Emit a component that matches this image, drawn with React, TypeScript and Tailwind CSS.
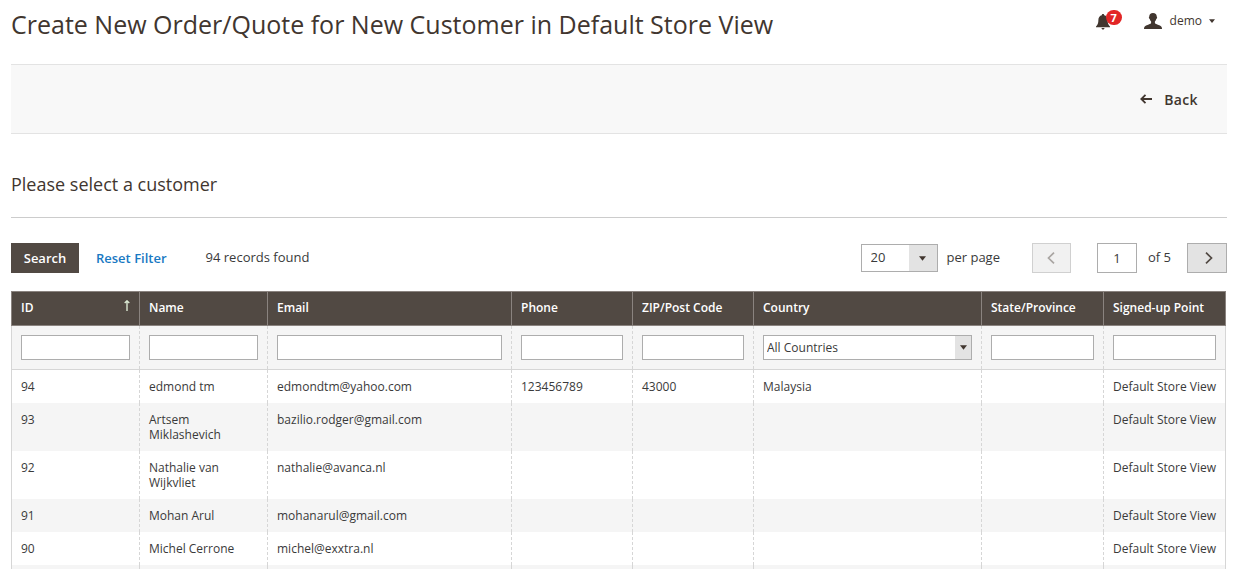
import React from "react";

type Customer = {
  id: string;
  name: string;
  email: string;
  phone?: string;
  zip?: string;
  country?: string;
  state?: string;
  store: string;
};

const customers: Customer[] = [
  { id: "94", name: "edmond tm", email: "edmondtm@yahoo.com", phone: "123456789", zip: "43000", country: "Malaysia", store: "Default Store View" },
  { id: "93", name: "Artsem Miklashevich", email: "bazilio.rodger@gmail.com", store: "Default Store View" },
  { id: "92", name: "Nathalie van Wijkvliet", email: "nathalie@avanca.nl", store: "Default Store View" },
  { id: "91", name: "Mohan Arul", email: "mohanarul@gmail.com", store: "Default Store View" },
  { id: "90", name: "Michel Cerrone", email: "michel@exxtra.nl", store: "Default Store View" },
];

const columns = [
  { key: "id", label: "ID", width: "w-[128px]" },
  { key: "name", label: "Name", width: "w-[128px]" },
  { key: "email", label: "Email", width: "w-[244px]" },
  { key: "phone", label: "Phone", width: "w-[121px]" },
  { key: "zip", label: "ZIP/Post Code", width: "w-[121px]" },
  { key: "country", label: "Country", width: "w-[228px]" },
  { key: "state", label: "State/Province", width: "w-[122px]" },
  { key: "store", label: "Signed-up Point", width: "w-[122px]" },
] as const;

function Caret({ className }: { className?: string }) {
  return (
    <svg viewBox="0 0 8 5" className={className} fill="currentColor" aria-hidden="true">
      <path d="M0 0h8L4 5z" />
    </svg>
  );
}

function Header() {
  return (
    <header className="flex h-16 items-start justify-between">
      <h1 className="pt-1 text-[25px] leading-10 text-[#41362f]">
        Create New Order/Quote for New Customer in Default Store View
      </h1>
      <div className="flex items-center pt-2 pr-3">
        <a href="#notifications" aria-label="Notifications" className="relative mr-8 block h-6 w-4 pt-1.5 text-[#41362f]">
          <svg viewBox="0 0 14 16" className="h-4 w-3.5" fill="currentColor" aria-hidden="true">
            <path d="M7 0c.8 0 1.200.5 1.200 1.200C10.500 1.700 11.600 3.500 11.600 5.800c0 3.600.7 5 2.400 6.700v.7H0v-.7c1.700-1.700 2.400-3.100 2.400-6.700 0-2.300 1.100-4.100 3.400-4.600C5.800.500 6.200 0 7 0zM5.500 14h3c0 .9-.6 1.500-1.500 1.500S5.500 14.900 5.500 14z" />
          </svg>
          <span className="absolute top-0.5 left-2.5 flex h-[15px] w-4 items-center justify-center rounded-full bg-[#e22626] text-[11px] leading-none font-bold text-white">
            7
          </span>
        </a>
        <button type="button" className="flex items-center pt-px text-xs text-[#41362f]">
          <svg viewBox="0 0 18 16" className="mr-2 h-4 w-[18px]" fill="currentColor" aria-hidden="true">
            <path d="M9 0c2.400 0 3.800 1.400 3.700 3.600.4.200.5.600.4 1.200-.1.700-.4 1.100-.8 1.200-.3 1.200-.8 2-1.400 2.600v1.500c.6 1 1.800 1.300 3.600 1.800 2.200.6 3.200 1.300 3.500 3.500V16H0v-.6c.3-2.200 1.300-2.900 3.500-3.500 1.800-.5 3-.8 3.600-1.800V8.600C6.500 8 6 7.200 5.700 6c-.4-.1-.7-.5-.8-1.200-.1-.6 0-1 .4-1.200C5.200 1.400 6.600 0 9 0z" />
          </svg>
          demo
          <Caret className="ml-[7px] h-1 w-1.5" />
        </button>
      </div>
    </header>
  );
}

function Toolbar() {
  return (
    <div className="flex flex-wrap items-center justify-between">
      <div className="flex items-center">
        <button type="button" className="h-[30px] w-[68px] bg-[#514943] pt-0.5 text-[13px] font-semibold text-white">
          Search
        </button>
        <button type="button" className="ml-[17px] pt-0.5 text-[13px] font-semibold text-[#1979c3]">
          Reset Filter
        </button>
        <p className="ml-[39px] text-[13px]">94 records found</p>
      </div>
      <div className="flex items-center text-[13px]">
        <label className="flex items-center">
          <span className="relative mr-[9px] block">
            <select defaultValue="20" className="h-7 w-[77px] appearance-none border border-[#adadad] bg-white pl-[9px] text-[13px]">
              <option>20</option>
              <option>30</option>
              <option>50</option>
            </select>
            <span className="pointer-events-none absolute inset-y-px right-px flex w-7 items-center justify-center bg-[#e3e3e3] text-[#41362f]">
              <Caret className="h-[5px] w-[7px]" />
            </span>
          </span>
          per page
        </label>
        <button type="button" disabled aria-label="Previous page" className="ml-8 flex h-[30px] w-[39px] items-center justify-center border border-[#d0d0d0] bg-[#f1f1f1] text-[#a9a5a2]">
          <svg viewBox="0 0 8 12" className="h-3 w-2" fill="none" stroke="currentColor" strokeWidth="1.7" aria-hidden="true">
            <path d="M7 .7 1.500 6 7 11.300" />
          </svg>
        </button>
        <label className="ml-[26px] flex items-center">
          <input aria-label="Page number" defaultValue="1" className="mr-[11px] h-[30px] w-10 border border-[#adadad] bg-white text-center" />
          of 5
        </label>
        <button type="button" aria-label="Next page" className="ml-4 flex h-[30px] w-10 items-center justify-center border border-[#adadad] bg-[#e3e3e3] text-[#514943]">
          <svg viewBox="0 0 8 12" className="ml-1 h-3 w-2" fill="none" stroke="currentColor" strokeWidth="1.7" aria-hidden="true">
            <path d="m1 .7 5.500 5.300L1 11.300" />
          </svg>
        </button>
      </div>
    </div>
  );
}

function CustomerTable() {
  return (
    <div className="mt-[18px] pr-px">
      <table className="w-full table-fixed border-collapse border border-[#d6d6d6] text-left text-xs leading-[15px]">
        <colgroup>
          {columns.map((c) => (
            <col key={c.key} className={c.width} />
          ))}
        </colgroup>
        <thead>
          <tr className="bg-[#514943] text-white">
            {columns.map((c) => (
              <th key={c.key} scope="col" className="h-[34px] border border-[#8a837f] px-[9px] pb-0.5 font-semibold whitespace-nowrap">
                <span className="flex items-center justify-between">
                  {c.label}
                  {c.key === "id" && (
                    <svg viewBox="0 0 8 12" className="-mr-px mb-1 h-[11px] w-2" fill="none" stroke="#dcebd5" strokeWidth="1.5" aria-label="Sorted ascending">
                      <path d="M4 12V1M1.500 3.300 4 .9l2.500 2.400" />
                    </svg>
                  )}
                </span>
              </th>
            ))}
          </tr>
          <tr className="border-b border-[#d6d6d6] bg-[#f5f5f5]">
            {columns.map((c) => (
              <td key={c.key} className="h-11 border-r border-dashed border-r-[#d6d6d6] px-[9px] last:border-solid">
                {c.key === "country" ? (
                  <span className="relative block">
                    <select aria-label="Filter by Country" className="block h-[25px] w-full appearance-none border border-[#adadad] bg-white pl-[3px]">
                      <option>All Countries</option>
                      <option>Malaysia</option>
                    </select>
                    <span className="pointer-events-none absolute inset-y-px right-px flex w-4 items-center justify-center bg-[#e3e3e3] text-[#41362f]">
                      <Caret className="h-[5px] w-[7px]" />
                    </span>
                  </span>
                ) : (
                  <input aria-label={`Filter by ${c.label}`} className="block h-[25px] w-full border border-[#adadad] bg-white px-1" />
                )}
              </td>
            ))}
          </tr>
        </thead>
        <tbody>
          {customers.map((row) => (
            <tr key={row.id} className="even:bg-[#f5f5f5]">
              {columns.map((c) => (
                <td
                  key={c.key}
                  className="border-r border-dashed border-r-[#d6d6d6] px-[9px] py-[9px] align-top last:border-solid last:text-right last:whitespace-nowrap"
                >
                  {row[c.key]}
                </td>
              ))}
            </tr>
          ))}
          <tr className="bg-[#f5f5f5]">
            {columns.map((c) => (
              <td key={c.key} className="h-1 border-r border-dashed border-r-[#d6d6d6] last:border-solid" />
            ))}
          </tr>
        </tbody>
      </table>
    </div>
  );
}

export default function App() {
  return (
    <main className="bg-white pr-3 pl-[11px] font-['Open_Sans',sans-serif] text-[#3a3a3a]">
      <Header />
      <div className="flex h-[70px] items-center justify-end border-y border-[#e3e3e3] bg-[#f8f8f8] pr-[29px]">
        <button type="button" className="flex items-center gap-3 pt-0.5 text-sm font-semibold tracking-wide text-[#41362f]">
          <svg viewBox="0 0 12 10" className="-mt-0.5 h-2.5 w-3" fill="none" stroke="currentColor" strokeWidth="1.800" aria-hidden="true">
            <path d="M12 5H1.500M5.500.8 1.300 5l4.200 4.200" />
          </svg>
          Back
        </button>
      </div>
      <section className="pt-9">
        <h2 className="mb-[25px] border-b border-[#cccccc] pb-[19px] text-lg leading-7 text-[#41362f]">Please select a customer</h2>
        <Toolbar />
        <CustomerTable />
      </section>
    </main>
  );
}
